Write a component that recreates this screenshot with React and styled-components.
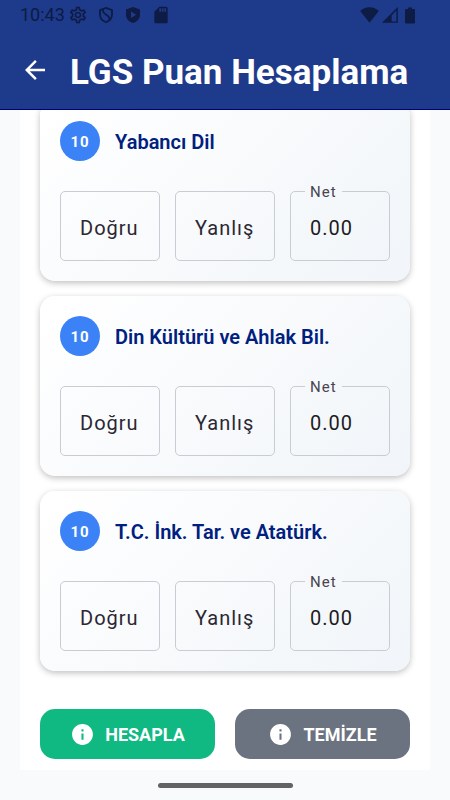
import React, { useId, useState } from "react";
import styled, { createGlobalStyle } from "styled-components";
import {
  MdArrowBack,
  MdInfo,
  MdOutlineSettings,
  MdSdCard,
} from "react-icons/md";

const GlobalStyle = createGlobalStyle`
  *, *::before, *::after { box-sizing: border-box; }
  body {
    margin: 0;
    background: #f8fafc;
    font-family: Roboto, "Noto Sans", sans-serif;
  }
`;

const Screen = styled.div`
  display: flex;
  flex-direction: column;
  height: 100vh;
`;

const Header = styled.header`
  flex: none;
  background: #1e3a8a;
  border-bottom: 1px solid #00007c;
`;

const StatusBar = styled.div`
  display: flex;
  align-items: center;
  justify-content: space-between;
  height: 30px;
  padding: 0 34px 0 20px;
  color: #0d1b45;
`;

const StatusGroup = styled.div`
  display: flex;
  align-items: center;
  gap: ${(p) => p.$gap}px;

  svg { display: block; }
`;

const Clock = styled.time`
  margin-right: -6px;
  font-size: 18px;
  line-height: 20px;
`;

const TitleBar = styled.div`
  display: flex;
  align-items: center;
  gap: 20px;
  height: 79px;
  padding: 0 20px;
`;

const BackButton = styled.button`
  display: flex;
  padding: 0;
  border: 0;
  background: none;
  color: #fff;
  cursor: pointer;
`;

const Title = styled.h1`
  margin: 0;
  padding-top: 6px;
  color: #fff;
  font-size: 35px;
  line-height: 44px;
  font-weight: 700;
  white-space: nowrap;
`;

const Viewport = styled.main`
  flex: 1;
  min-height: 0;
  display: flex;
  flex-direction: column;
  justify-content: flex-end;
  overflow: hidden;
  padding: 0 20px;
`;

const Panel = styled.form`
  flex: none;
  display: flex;
  flex-direction: column;
  gap: 15px;
  padding: 20px 20px 11px;
  background: #fff;
`;

const Card = styled.section`
  display: flex;
  flex-direction: column;
  gap: 30px;
  padding: 20px;
  border-radius: 15px;
  background: linear-gradient(135deg, #ffffff, #f1f5f9);
  box-shadow: 0 2px 6px rgba(0, 0, 0, 0.25);
`;

const CardHeader = styled.div`
  display: flex;
  align-items: center;
  gap: 15px;
`;

const CountBadge = styled.span`
  display: flex;
  align-items: center;
  justify-content: center;
  width: 40px;
  height: 40px;
  padding-top: 2px;
  border-radius: 50%;
  background: #3b82f6;
  color: #fff;
  font-size: 15px;
  font-weight: 700;
  letter-spacing: 1px;
`;

const CardTitle = styled.h2`
  margin: 0;
  padding-top: 2px;
  color: #00207f;
  font-size: 20px;
  line-height: 24px;
  font-weight: 600;
`;

const Fields = styled.div`
  display: grid;
  grid-template-columns: repeat(3, 1fr);
  gap: 15px;
`;

const TextInput = styled.input`
  width: 100%;
  min-width: 0;
  height: 70px;
  padding: 4px 19px 0;
  border: 1px solid #c9ccd2;
  border-radius: 5px;
  background: transparent;
  color: #1c1b1f;
  font: 400 20px/24px Roboto, "Noto Sans", sans-serif;
  letter-spacing: 1px;

  &::placeholder { color: #2b2733; opacity: 1; }
`;

const NetBox = styled.fieldset`
  min-width: 0;
  height: 79px;
  margin: -9px 0 0;
  padding: 0 14px;
  border: 1px solid #c9ccd2;
  border-radius: 5px;
`;

const NetLegend = styled.legend`
  padding: 2px 5px 0;
  color: #49454f;
  font-size: 15px;
  line-height: 17px;
  letter-spacing: 1px;
`;

const NetInput = styled(TextInput)`
  height: 54px;
  padding: 0 5px;
  border: 0;
`;

const Actions = styled.div`
  display: grid;
  grid-template-columns: 1fr 1fr;
  gap: 20px;
  margin-top: 23px;
`;

const ActionButton = styled.button`
  display: flex;
  align-items: center;
  justify-content: center;
  gap: 10px;
  height: 50px;
  padding: 0;
  border: 0;
  border-radius: 15px;
  background: ${(p) => p.$color};
  color: #fff;
  font: 700 18px/24px Roboto, "Noto Sans", sans-serif;
  cursor: pointer;
`;

const ActionLabel = styled.span`
  padding-top: 2px;
`;

const NavArea = styled.footer`
  flex: none;
  display: flex;
  align-items: center;
  justify-content: center;
  height: 30px;
`;

const HomeHandle = styled.div`
  width: 30%;
  height: 5px;
  border-radius: 3px;
  background: #636366;
`;

const SUBJECTS = [
  { name: "Yabancı Dil", questions: 10 },
  { name: "Din Kültürü ve Ahlak Bil.", questions: 10 },
  { name: "T.C. İnk. Tar. ve Atatürk.", questions: 10 },
];

function ShieldOffIcon() {
  return (
    <svg width="18" height="18" viewBox="-1 0 18 18" fill="none" stroke="currentColor" strokeWidth="1.8" aria-hidden="true">
      <path d="M8 1.9 14 4.1V8.6C14 12.2 11.6 15 8 16.2 4.4 15 2 12.2 2 8.6V4.1Z" />
      <path d="M5 3C3.8 10 12.6 7.6 11.4 14.4" />
    </svg>
  );
}

function ShieldPlayIcon() {
  return (
    <svg width="18" height="18" viewBox="-1 0 18 18" fill="currentColor" fillRule="evenodd" aria-hidden="true">
      <path d="M8 1 15 3.6V8.6C15 12.7 12.1 16 8 17.1 3.9 16 1 12.7 1 8.6V3.6ZM6 5.6V12L11.2 8.8Z" />
    </svg>
  );
}

function WifiIcon() {
  return (
    <svg width="19" height="16" viewBox="0 0 19 16" fill="currentColor" aria-hidden="true">
      <path d="M9.5 15.7.2 4.1C2.6 2 5.8.3 9.5.3S16.4 2 18.8 4.1Z" />
    </svg>
  );
}

function SignalIcon() {
  return (
    <svg width="16" height="16" viewBox="0 0 16 16" fill="currentColor" fillRule="evenodd" aria-hidden="true">
      <path d="M0 15.8 15.8 0V15.8ZM9.6 14.4H14.4V3.6L9.6 8.4Z" />
    </svg>
  );
}

function BatteryIcon() {
  return (
    <svg width="12" height="17" viewBox="0 0 12 17" fill="currentColor" aria-hidden="true">
      <path d="M4 .6H8V2H10A1 1 0 0 1 11 3V15.6A1 1 0 0 1 10 16.6H2A1 1 0 0 1 1 15.6V3A1 1 0 0 1 2 2H4Z" />
    </svg>
  );
}

function SubjectCard({ name, questions }) {
  const id = useId();
  const [correct, setCorrect] = useState("");
  const [wrong, setWrong] = useState("");
  const net = (Number(correct) || 0) - (Number(wrong) || 0) / 3;

  return (
    <Card aria-labelledby={`${id}-title`}>
      <CardHeader>
        <CountBadge>{questions}</CountBadge>
        <CardTitle id={`${id}-title`}>{name}</CardTitle>
      </CardHeader>
      <Fields>
        <TextInput
          inputMode="numeric"
          placeholder="Doğru"
          aria-label="Doğru"
          value={correct}
          onChange={(e) => setCorrect(e.target.value)}
        />
        <TextInput
          inputMode="numeric"
          placeholder="Yanlış"
          aria-label="Yanlış"
          value={wrong}
          onChange={(e) => setWrong(e.target.value)}
        />
        <NetBox>
          <NetLegend>
            <label htmlFor={`${id}-net`}>Net</label>
          </NetLegend>
          <NetInput id={`${id}-net`} readOnly value={net.toFixed(2)} />
        </NetBox>
      </Fields>
    </Card>
  );
}

export default function App() {
  const [round, setRound] = useState(0);

  return (
    <Screen lang="tr">
      <GlobalStyle />
      <Header>
        <StatusBar>
          <StatusGroup $gap={9}>
            <Clock>10:43</Clock>
            <MdOutlineSettings size={20} />
            <ShieldOffIcon />
            <ShieldPlayIcon />
            <MdSdCard size={20} />
          </StatusGroup>
          <StatusGroup $gap={3}>
            <WifiIcon />
            <SignalIcon />
            <span />
            <BatteryIcon />
          </StatusGroup>
        </StatusBar>
        <TitleBar>
          <BackButton type="button" aria-label="Geri">
            <MdArrowBack size={30} />
          </BackButton>
          <Title>LGS Puan Hesaplama</Title>
        </TitleBar>
      </Header>
      <Viewport>
        <Panel onSubmit={(e) => e.preventDefault()}>
          {SUBJECTS.map((s) => (
            <SubjectCard key={`${s.name}-${round}`} {...s} />
          ))}
          <Actions>
            <ActionButton type="submit" $color="#10b981">
              <MdInfo size={25} />
              <ActionLabel>HESAPLA</ActionLabel>
            </ActionButton>
            <ActionButton type="button" $color="#6b7280" onClick={() => setRound(round + 1)}>
              <MdInfo size={25} />
              <ActionLabel>TEMİZLE</ActionLabel>
            </ActionButton>
          </Actions>
        </Panel>
      </Viewport>
      <NavArea>
        <HomeHandle />
      </NavArea>
    </Screen>
  );
}
